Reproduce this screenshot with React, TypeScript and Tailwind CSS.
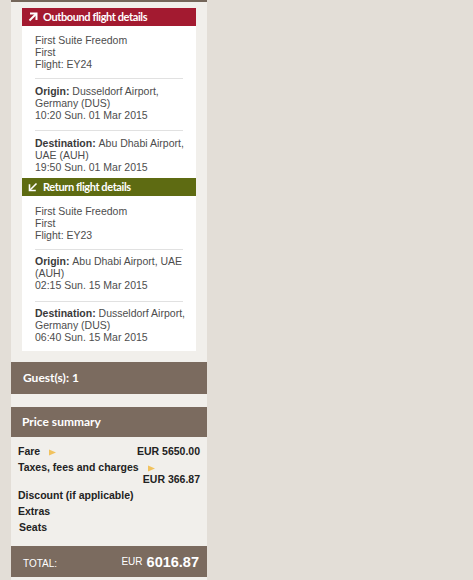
import React from "react";

const body = { fontFamily: '"Liberation Sans", Arial, sans-serif' };
const head = { fontFamily: 'Lato, "Open Sans", sans-serif' };

function Arrow({ dir }: { dir: "up" | "down" }) {
  return (
    <svg width="10" height="10" viewBox="0 0 10 10" className="shrink-0">
      {dir === "up" ? (
        <g stroke="white" strokeWidth="2" fill="none">
          <line x1="1.5" y1="8.5" x2="8" y2="2" />
          <polyline points="3,1.5 8.5,1.5 8.5,7" strokeLinecap="square" />
        </g>
      ) : (
        <g stroke="white" strokeWidth="1.6" fill="none">
          <line x1="8.5" y1="1.5" x2="2" y2="8" />
          <polyline points="1.5,3 1.5,8.5 7,8.5" strokeLinecap="square" />
        </g>
      )}
    </svg>
  );
}

function Tri() {
  return (
    <svg width="7" height="7" viewBox="0 0 7 7" className="inline-block ml-[9px] align-middle">
      <polygon points="0,0.5 7,3.5 0,6.5" fill="#f1c25e" />
    </svg>
  );
}

function Block({ label, lines, cls }: { label?: string; lines: string[]; cls: string }) {
  return (
    <div className={cls}>
      {lines.map((l, i) => (
        <div key={i} className="h-[12px] leading-[12px] whitespace-nowrap">
          {i === 0 && label ? <span className="font-bold text-[#3a3a3a]">{label}: </span> : null}
          {l}
        </div>
      ))}
    </div>
  );
}

export default function App() {
  return (
    <div className="w-[473px] h-[580px] bg-[#e3ded7] overflow-hidden" style={body}>
      <div className="ml-[11px] w-[196px] h-[580px] bg-[#f1efeb] flex flex-col">
        <div className="h-[2px] bg-[#74665a]" />
        <div className="px-[11px] pt-[6px]">
          <div className="bg-white text-[10.5px] text-[#4d4d4d]">
            <div className="h-[18px] bg-[#a31a30] flex items-center pl-[6px] gap-[5px] text-white text-[11px] font-bold tracking-[-0.4px]" style={head}>
              <Arrow dir="up" />
              <span>Outbound flight details</span>
            </div>
            <div className="px-[13px]">
              <Block cls="pt-[8px] pb-[8px] border-b border-[#e1e1e1]" lines={["First Suite Freedom", "First", "Flight: EY24"]} />
              <Block cls="pt-[6px] pb-[9px] border-b border-[#e1e1e1]" label="Origin" lines={["Dusseldorf Airport,", "Germany (DUS)", "10:20 Sun. 01 Mar 2015"]} />
              <Block cls="pt-[6px] pb-[5px]" label="Destination" lines={["Abu Dhabi Airport,", "UAE (AUH)", "19:50 Sun. 01 Mar 2015"]} />
            </div>
            <div className="h-[18px] bg-[#5e6b12] flex items-center pl-[6px] gap-[5px] text-white text-[11px] font-bold tracking-[-0.4px]" style={head}>
              <Arrow dir="down" />
              <span>Return flight details</span>
            </div>
            <div className="px-[13px]">
              <Block cls="pt-[9px] pb-[8px] border-b border-[#e1e1e1]" lines={["First Suite Freedom", "First", "Flight: EY23"]} />
              <Block cls="pt-[5px] pb-[10px] border-b border-[#e1e1e1]" label="Origin" lines={["Abu Dhabi Airport, UAE", "(AUH)", "02:15 Sun. 15 Mar 2015"]} />
              <Block cls="pt-[5px] pb-[8px]" label="Destination" lines={["Dusseldorf Airport,", "Germany (DUS)", "06:40 Sun. 15 Mar 2015"]} />
            </div>
          </div>
        </div>
        <div className="mt-[11px] h-[32px] bg-[#7b6b5f] flex items-center pl-[12px] text-white text-[12px] font-bold" style={head}>
          Guest(s): 1
        </div>
        <div className="mt-[13px] h-[30px] bg-[#7b6b5f] flex items-center pl-[11px] text-white text-[12px] font-bold" style={head}>
          Price summary
        </div>
        <div className="pl-[7px] pr-[7px] pt-[8px] pb-[13px] text-[10.5px] font-bold text-[#222] flex flex-col gap-[4px]">
          <div className="flex justify-between h-[12px] leading-[12px]">
            <span>Fare<Tri /></span>
            <span>EUR 5650.00</span>
          </div>
          <div className="flex flex-col">
            <div className="h-[12px] leading-[12px]">Taxes, fees and charges<Tri /></div>
            <div className="h-[12px] leading-[12px] text-right">EUR 366.87</div>
          </div>
          <div className="h-[12px] leading-[12px]">Discount (if applicable)</div>
          <div className="h-[12px] leading-[12px]">Extras</div>
          <div className="h-[12px] leading-[12px] pl-[1px]">Seats</div>
        </div>
        <div className="h-[31px] bg-[#7b6b5f] flex items-center justify-between pl-[12px] pr-[8px] text-white">
          <span className="text-[10px] mt-[4px]">TOTAL:</span>
          <span className="flex items-start">
            <span className="text-[10px] mr-[4px]">EUR</span>
            <span className="text-[14.5px] font-bold leading-[16px]">6016.87</span>
          </span>
        </div>
      </div>
    </div>
  );
}
